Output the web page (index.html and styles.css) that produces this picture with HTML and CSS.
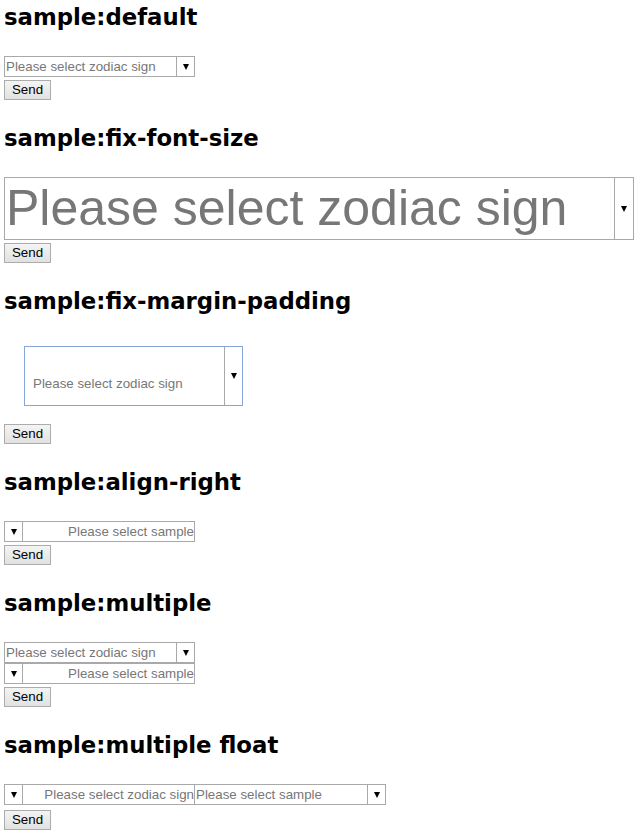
FILE: index.html
```html
<!DOCTYPE html>
<html>
<head>
<meta charset="utf-8">
<title>samples</title>
<link rel="stylesheet" href="styles.css">
</head>
<body>
  <section class="sample first">
    <h2 class="title">sample:default</h2>
    <div class="sel sel-default">
      <span class="label">Please select zodiac sign</span>
      <span class="arrow"><i class="tri"></i></span>
    </div>
    <button class="send">Send</button>
  </section>

  <section class="sample">
    <h2 class="title">sample:fix-font-size</h2>
    <div class="sel sel-big">
      <span class="label">Please select zodiac sign</span>
      <span class="arrow"><i class="tri"></i></span>
    </div>
    <button class="send">Send</button>
  </section>

  <section class="sample">
    <h2 class="title">sample:fix-margin-padding</h2>
    <div class="sel sel-pad">
      <span class="label">Please select zodiac sign</span>
      <span class="arrow"><i class="tri"></i></span>
    </div>
    <button class="send">Send</button>
  </section>

  <section class="sample">
    <h2 class="title">sample:align-right</h2>
    <div class="sel sel-right">
      <span class="arrow"><i class="tri"></i></span>
      <span class="label">Please select sample</span>
    </div>
    <button class="send">Send</button>
  </section>

  <section class="sample">
    <h2 class="title">sample:multiple</h2>
    <div class="sel sel-default">
      <span class="label">Please select zodiac sign</span>
      <span class="arrow"><i class="tri"></i></span>
    </div>
    <div class="sel sel-right">
      <span class="arrow"><i class="tri"></i></span>
      <span class="label">Please select sample</span>
    </div>
    <button class="send">Send</button>
  </section>

  <section class="sample">
    <h2 class="title">sample:multiple float</h2>
    <div class="float-row">
      <div class="sel sel-right">
        <span class="arrow"><i class="tri"></i></span>
        <span class="label">Please select zodiac sign</span>
      </div>
      <div class="sel sel-default sel-joined">
        <span class="label">Please select sample</span>
        <span class="arrow"><i class="tri"></i></span>
      </div>
    </div>
    <button class="send send-float">Send</button>
  </section>
</body>
</html>
```

FILE: styles.css
```css
html, body {
  background: #ffffff;
}
body {
  margin: 0;
  padding: 4px 6px 0 4px;
  font-family: "Liberation Sans", Arial, sans-serif;
  font-size: 13.33px;
  color: #000;
}
.sample {
  display: flex;
  flex-direction: column;
  align-items: flex-start;
}
.title {
  font-family: "DejaVu Sans", Verdana, sans-serif;
  font-weight: bold;
  font-size: 22.8px;
  line-height: 26px;
  margin: 25px 0 26px 0;
  color: #000;
}
.first .title {
  margin-top: 0;
}
.sel {
  box-sizing: border-box;
  display: flex;
  align-items: stretch;
  width: 191px;
  height: 21px;
  border: 1px solid #a9a9a9;
  background: #fff;
  color: #777;
  font-size: 13.33px;
  line-height: 19px;
}
.label {
  flex: 1;
  padding-left: 1px;
  white-space: nowrap;
  overflow: hidden;
}
.arrow {
  flex: 0 0 17px;
  display: flex;
  align-items: center;
  justify-content: center;
  border-left: 1px solid #a9a9a9;
}
.tri {
  display: block;
  width: 0;
  height: 0;
  border-left: 3px solid transparent;
  border-right: 3px solid transparent;
  border-top: 6px solid #000;
}
.sel-right .arrow {
  border-left: none;
  border-right: 1px solid #a9a9a9;
}
.sel-right .label {
  text-align: right;
  padding-left: 0;
  padding-right: 0;
}
.sel-big {
  width: 630px;
  height: 63px;
  font-size: 50px;
  line-height: 61px;
}
.sel-big .label {
  padding-left: 1px;
}
.sel-big .arrow {
  flex-basis: 18px;
}
.sel-pad {
  width: 219px;
  height: 60px;
  margin: 6px 0 18px 20px;
  border-color: #86a5dd;
}
.sel-pad .label {
  align-self: flex-end;
  padding: 0 0 14px 8px;
  line-height: 15px;
}
.float-row {
  display: flex;
}
.sel-joined {
  margin-left: -1px;
  width: 192px;
}
.send {
  box-sizing: border-box;
  margin-top: 3px;
  width: 47px;
  height: 20px;
  padding: 0;
  border: 1px solid #acacac;
  border-radius: 0;
  background: linear-gradient(#f4f4f4, #e1e1e1);
  font-family: "Liberation Sans", Arial, sans-serif;
  font-size: 13.33px;
  line-height: 18px;
  color: #000;
}
.sel-pad + .send {
  margin-top: 0;
}
.send-float {
  margin-top: 5px;
}
```
